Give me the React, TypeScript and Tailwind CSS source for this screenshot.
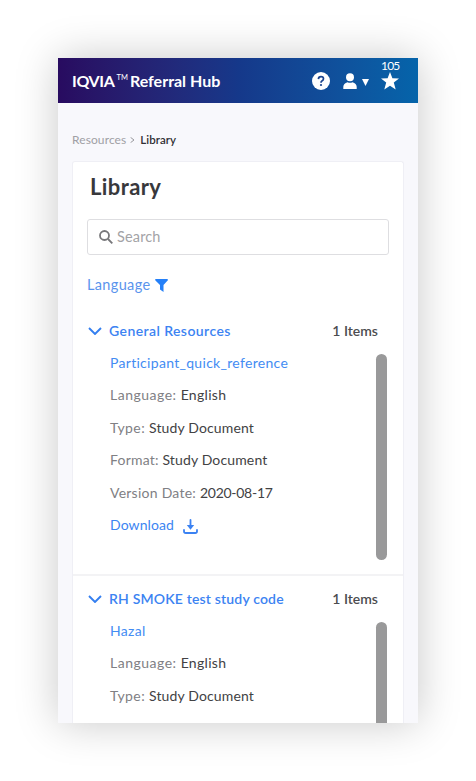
type Field = { label: string; labelClass: string; value: string; valueClass: string };

const CARET = 'M1 1l6 6 6-6';

const LANGUAGE: Field = { label: 'Language', labelClass: 'tracking-[0.5px]', value: 'English', valueClass: 'tracking-[0.3px]' };
const TYPE: Field = { label: 'Type', labelClass: 'tracking-[0.4px]', value: 'Study Document', valueClass: 'tracking-[0.14px]' };
const FORMAT: Field = { label: 'Format', labelClass: 'tracking-[0.2px]', value: 'Study Document', valueClass: 'tracking-[0.14px]' };
const VERSION: Field = { label: 'Version Date', labelClass: 'tracking-[0.25px]', value: '2020-08-17', valueClass: 'tracking-[-0.27px]' };

function Row({ field }: { field: Field }) {
  return (
    <p className="flex h-[32.5px] items-center whitespace-pre text-[#424244]">
      <span className={'text-[#808084] ' + field.labelClass}>{field.label}: </span>
      <span className={field.valueClass}>{field.value}</span>
    </p>
  );
}

function Section({ title, titleClass, link, fields, download }: {
  title: string; titleClass: string; link: string; fields: Field[]; download?: boolean;
}) {
  return (
    <section className="h-[268px] shrink-0 border-b-2 border-[#f3f3f5] pt-[12px]">
      <header className="flex h-5 items-center pl-[15px] pr-[25px] font-semibold">
        <svg className="mr-[7px] mt-[2px] h-2 w-[14px] shrink-0" viewBox="0 0 14 8" fill="none" stroke="#347ff0" strokeWidth="1.9"><path d={CARET} /></svg>
        <h2 className={'whitespace-nowrap text-[14px] text-[#3c83f2] ' + titleClass}>{title}</h2>
        <span className="ml-auto whitespace-nowrap text-[14px] text-[#4c4c50]">1 Items</span>
      </header>
      <div className="mt-[6px] flex h-[212px] justify-between pl-[37px] pr-4">
        <div className="text-[14px]">
          <p className="flex h-[32.5px] items-center tracking-[0.3px] text-[#438cf3]">{link}</p>
          {fields.map((f) => <Row key={f.label} field={f} />)}
          {download && (
            <p className="flex h-[32.5px] items-center gap-[9px] tracking-[0.1px] text-[#3c85f2]">
              Download
              <svg className="mt-[3px] h-[15px] w-[15px]" viewBox="0 0 15 15" fill="none" stroke="#3b82f2" strokeWidth="1.8">
                <path d="M1 11v1.2q0 1.8 1.8 1.8h9.4q1.8 0 1.8-1.8V11M7.5 1v6" strokeLinecap="round" />
                <path d="M3.8 6h7.4L7.5 10.8z" fill="#3b82f2" stroke="none" />
              </svg>
            </p>
          )}
        </div>
        <div className="mt-[8px] h-[206px] w-[11px] shrink-0 rounded-full bg-[#99999a]" />
      </div>
    </section>
  );
}

export default function App() {
  return (
    <div className="h-[781px] w-[476px] overflow-hidden bg-white p-[58px] font-['Lato',sans-serif]">
      <main className="flex h-[665px] w-[360px] flex-col bg-[#f8f8fc] shadow-[0_0_40px_rgba(0,0,0,0.22)]">
        <header className="flex h-[45px] shrink-0 items-center bg-linear-to-r from-[#280b60] via-[#15388a] to-[#0564aa] pl-[14px] pr-[19px] pt-px text-white">
          <h1 className="flex items-center whitespace-nowrap text-[16px] font-bold">
            <span className="tracking-[-0.35px]">IQVIA</span>
            <span className="ml-[2px] mr-[2px] mt-[-7px] text-[7.5px] font-normal">TM</span>
            <span>Referral Hub</span>
          </h1>
          <svg className="ml-auto h-[18px] w-[18px]" viewBox="0 0 18 18" fill="none">
            <circle cx="9" cy="9" r="9" fill="white" />
            <path d="M6.4 7.1Q6.5 4.6 9 4.6t2.5 2.1Q11.5 8 9.9 8.9 9 9.4 9 10.7" stroke="#1a438e" strokeWidth="1.7" />
            <circle cx="9" cy="13" r="1.1" fill="#1a438e" />
          </svg>
          <svg className="ml-[13px] h-[16px] w-[14px]" viewBox="0 0 14 16" fill="white"><circle cx="7" cy="4.2" r="4" /><path d="M.3 16v-2.3Q.5 10.8 4.5 9.3q2.5 1 5 0 4 1.5 4.2 4.4V16z" /></svg>
          <svg className="ml-[5px] mt-[3px] h-[7px] w-[7px]" viewBox="0 0 8 7" preserveAspectRatio="none" fill="white"><path d="M0 0h8L4 7z" /></svg>
          <div className="relative ml-[12px]">
            <svg className="h-[18px] w-[18px]" viewBox="0 0 18 18" fill="white"><path d="M9 0l2.4 6.2 6.6.2-5.2 4.2 1.9 7L9 13.7l-5.7 3.9 1.9-7L0 6.4l6.6-.2z" /></svg>
            <span className="absolute left-0 top-[-14px] text-[12px] leading-4 tracking-[-0.8px]">105</span>
          </div>
        </header>
        <nav className="ml-[14px] mt-[27px] flex h-[19px] items-center whitespace-nowrap text-[12px]">
          <span className="tracking-[0.1px] text-[#a0a0a5]">Resources</span>
          <svg className="ml-[4px] mr-[5px] h-[6px] w-[5px]" viewBox="0 0 5 6" fill="none" stroke="#99999d"><path d="M.6.4L4 3 .6 5.6" /></svg>
          <span className="text-[11.5px] font-semibold tracking-[0.05px] text-[#303034]">Library</span>
        </nav>
        <article className="mx-[14px] mt-[12px] flex min-h-0 flex-1 flex-col overflow-hidden rounded-t-[3px] border border-b-0 border-[#efeff5] bg-white">
          <h1 className="ml-[17px] mt-[11px] text-[22px] font-bold leading-7 tracking-[0.4px] text-[#38383c]">Library</h1>
          <div className="ml-[14px] mt-[18px] flex h-[36px] w-[302px] shrink-0 items-center rounded-[3px] border border-[#dedee1] pl-[11px] text-[14.5px] tracking-[0.15px] text-[#a3a3a6]">
            <svg className="mr-[4px] h-[14px] w-[14px]" viewBox="0 0 14 14" fill="none" stroke="#77777a" strokeWidth="1.8"><circle cx="5.5" cy="5.5" r="4.5" /><path d="M9 9l4.3 4.3" /></svg>
            Search
          </div>
          <div className="ml-[14px] mt-[20px] flex h-5 items-center text-[14.5px] tracking-[0.35px] text-[#5a94ed]">
            <span>Language</span>
            <svg className="ml-[5px] h-[13px] w-[13px]" viewBox="0 0 13 13" fill="#2580f8"><path d="M.5 0h12q.8 1-.1 1.8L8.5 6v7L5 10.4V6L.7 1.8Q-.3 1 .5 0z" /></svg>
          </div>
          <div className="mt-[13px]">
            <Section title="General Resources" titleClass="tracking-[0.42px]" link="Participant_quick_reference" download fields={[LANGUAGE, TYPE, FORMAT, VERSION]} />
            <Section title="RH SMOKE test study code" titleClass="tracking-[0.17px]" link="Hazal" fields={[LANGUAGE, TYPE]} />
          </div>
        </article>
      </main>
    </div>
  );
}
